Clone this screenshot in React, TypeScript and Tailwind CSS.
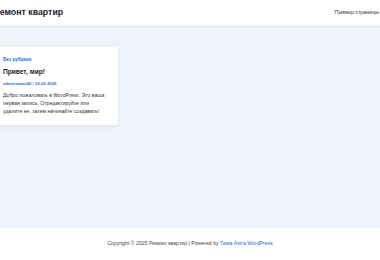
import React from "react";

export default function App() {
  return (
    <div className="w-[380px] h-[260px] flex flex-col overflow-hidden bg-white" style={{ fontFamily: '"Liberation Sans", Arial, sans-serif' }}>
      <header className="h-[27px] shrink-0 flex items-center justify-between border-b border-[#e3e8ee] bg-white">
        <div className="ml-[-6px] text-[8.8px] font-bold text-[#1e2530] whitespace-nowrap">Ремонт квартир</div>
        <div className="mr-[1px] text-[5.3px] text-[#333] whitespace-nowrap">Пример страницы</div>
      </header>
      <main className="flex-1 bg-[#eff4fb] pt-[20px]">
        <article className="w-[118px] bg-white shadow-[0_2px_6px_rgba(0,0,0,0.06)] pl-[3px] pr-[11px] pt-[9px] pb-[10px]">
          <div className="text-[4.6px] font-bold text-[#1e6fd9] leading-[7px]">Без рубрики</div>
          <h2 className="mt-[4px] text-[6.6px] font-bold text-[#1e2530] leading-[10px]">Привет, мир!</h2>
          <div className="mt-[3px] text-[4.3px] font-bold text-[#1e6fd9] leading-[7px]">adminzamo90 / 25.02.2025</div>
          <p className="mt-[4px] text-[5.15px] text-[#333] leading-[8px]">
            Добро пожаловать в WordPress. Это ваша<br />первая запись. Отредактируйте или<br />удалите ее, затем начинайте создавать!
          </p>
        </article>
      </main>
      <footer className="h-[32px] shrink-0 flex items-center justify-center bg-white text-[5.2px] text-[#444] whitespace-nowrap">
        Copyright © 2025 Ремонт квартир | Powered by&nbsp;<span className="text-[#1e6fd9]">Тема Astra WordPress</span>
      </footer>
    </div>
  );
}
